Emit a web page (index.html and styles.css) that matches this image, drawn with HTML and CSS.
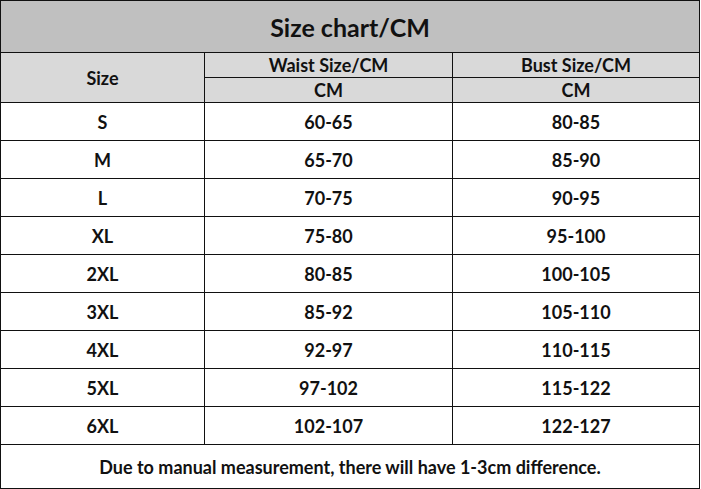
FILE: index.html
```html
<!DOCTYPE html>
<html>
<head>
<meta charset="utf-8">
<link rel="stylesheet" href="styles.css">
</head>
<body>
<div class="chart">
  <div class="cell title">Size chart/CM</div>
  <div class="cell head size-head">Size</div>
  <div class="cell head">Waist Size/CM</div>
  <div class="cell head">Bust Size/CM</div>
  <div class="cell head">CM</div>
  <div class="cell head">CM</div>
  <div class="cell">S</div><div class="cell">60-65</div><div class="cell">80-85</div>
  <div class="cell">M</div><div class="cell">65-70</div><div class="cell">85-90</div>
  <div class="cell">L</div><div class="cell">70-75</div><div class="cell">90-95</div>
  <div class="cell">XL</div><div class="cell">75-80</div><div class="cell">95-100</div>
  <div class="cell">2XL</div><div class="cell">80-85</div><div class="cell">100-105</div>
  <div class="cell">3XL</div><div class="cell">85-92</div><div class="cell">105-110</div>
  <div class="cell">4XL</div><div class="cell">92-97</div><div class="cell">110-115</div>
  <div class="cell">5XL</div><div class="cell">97-102</div><div class="cell">115-122</div>
  <div class="cell">6XL</div><div class="cell">102-107</div><div class="cell">122-127</div>
  <div class="cell note">Due to manual measurement, there will have 1-3cm difference.</div>
</div>
</body>
</html>
```
FILE: styles.css
```css
html, body {
  margin: 0;
  padding: 0;
  background: #ffffff;
}
.chart {
  width: 700px;
  height: 489px;
  box-sizing: border-box;
  padding: 1px;
  background: #111111;
  display: grid;
  grid-template-columns: 203px 247px 246px;
  grid-template-rows: 51px 24px 24px repeat(9, 37px) 43px;
  gap: 1px;
  font-family: Lato, "Open Sans", sans-serif;
  font-weight: 700;
  color: #111111;
}
.cell {
  background: #ffffff;
  display: flex;
  align-items: center;
  justify-content: center;
  font-size: 18px;
}
.title {
  grid-column: 1 / 4;
  background: #c0c0c0;
  font-size: 25px;
}
.head {
  background: #d9d9d9;
  font-size: 18px;
}
.size-head {
  grid-row: 2 / 4;
}
.note {
  grid-column: 1 / 4;
  font-size: 18px;
}
```
